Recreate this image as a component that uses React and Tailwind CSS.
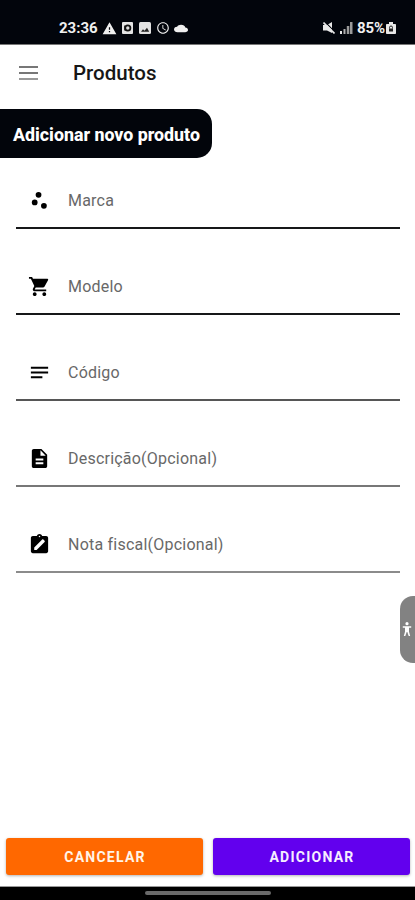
import clsx from "clsx";
import {
  MdAccessTime,
  MdCloud,
  MdDescription,
  MdNotes,
  MdScatterPlot,
  MdShoppingCart,
  MdWarning,
} from "react-icons/md";

function ClipboardEditIcon({ className }) {
  return (
    <svg viewBox="0 0 24 24" className={className}>
      <path
        fill="currentColor"
        d="M19 3h-4.18C14.4 1.84 13.3 1 12 1s-2.4.84-2.82 2H5c-1.1 0-2 .9-2 2v14c0 1.1.9 2 2 2h14c1.1 0 2-.9 2-2V5c0-1.1-.9-2-2-2z"
      />
      <circle cx="12" cy="3.6" r="0.8" fill="#fff" />
      <path fill="#fff" d="M6.500 15.200v2.500H9l8.300-8.300c.4-.4.4-.8 0-1.200l-1.300-1.300c-.4-.4-.8-.4-1.200 0z" />
    </svg>
  );
}

function SafeIcon({ className }) {
  return (
    <svg viewBox="0 0 11 12" className={className}>
      <rect width="11" height="12" rx="1" fill="#e4e4e4" />
      <circle cx="5.8" cy="6" r="2.6" fill="#ddd" stroke="#111" strokeWidth="1.8" />
      <path d="M2.800 3.500v5" stroke="#111" strokeWidth="1.200" />
    </svg>
  );
}

function PictureIcon({ className }) {
  return (
    <svg viewBox="0 0 12 12" className={className}>
      <rect width="12" height="12" rx="1.5" fill="#e2e2e2" />
      <path fill="#222" d="M2 9.800l2-2.500 1.500 1.500L8 5.800l2.200 4z" />
    </svg>
  );
}

function MuteIcon({ className }) {
  return (
    <svg viewBox="0 0 12 12" className={className}>
      <path fill="#e8e8e8" d="M0 3h4l5-3v11L4 8.500H0z" />
      <path d="M1.200-.8l11 11" stroke="#02050c" strokeWidth="1.200" />
      <path d="M.5.5l11 11" stroke="#e8e8e8" strokeWidth="1.600" />
    </svg>
  );
}

function SignalIcon({ className }) {
  return (
    <svg viewBox="0 0 13 12" className={className}>
      <path fill="#e8e8e8" d="M0 9h2v3H0z" />
      <path fill="#b0b0b0" d="M3.500 7h2v5h-2z" />
      <path fill="#9a9a9a" d="M6.800 4h2.500v8H6.800zM10 0h2.500v12H10z" />
    </svg>
  );
}

function BatteryIcon({ className }) {
  return (
    <svg viewBox="0 0 10 12" className={className}>
      <path fill="#e8e8e8" d="M3 0h4v2h2.200c.5 0 .8.3.8.8v8.400c0 .5-.3.800-.8.800H.8c-.5 0-.8-.3-.8-.8V2.800c0-.5.3-.8.8-.8H3z" />
      <path fill="none" stroke="#222" d="M3.500 6.500v-1a1.500 1.500 0 0 1 3 0v1" />
      <path fill="#222" d="M3 6.500h4v3H3z" />
    </svg>
  );
}

function AccessibilityIcon({ className }) {
  return (
    <svg viewBox="0 0 10 15" className={className}>
      <circle cx="5" cy="1.700" r="1.600" fill="#fff" />
      <path fill="#fff" d="M.8 4.200h8.400v1.500H7v4L8.200 14H6.700L5.300 10h-.6L3.300 14H1.800L3 9.700v-4H.8z" />
    </svg>
  );
}

const fields = [
  { label: "Marca", icon: MdScatterPlot, line: "border-[#161819]" },
  { label: "Modelo", icon: MdShoppingCart, line: "border-[#161819]" },
  { label: "Código", icon: MdNotes, line: "border-[#565656]" },
  { label: "Descrição(Opcional)", icon: MdDescription, line: "border-[#777]" },
  { label: "Nota fiscal(Opcional)", icon: ClipboardEditIcon, line: "border-[#8b8b8b]" },
];

function StatusBar() {
  return (
    <div className="flex h-11 items-end justify-between bg-[#02050c] pr-[19px] pb-[8px] pl-[59px] text-[#f0f0f0]">
      <div className="flex h-4 items-center">
        <span className="w-[39px] text-[15px] leading-4 font-bold whitespace-nowrap">23:36</span>
        <MdWarning className="ml-[4px] size-[15px]" />
        <SafeIcon className="ml-[5px] h-3 w-[11px]" />
        <PictureIcon className="ml-[6px] size-3" />
        <MdAccessTime className="ml-[5px] size-[14px]" />
        <MdCloud className="ml-[4px] h-[11px] w-[14px]" preserveAspectRatio="none" />
      </div>
      <div className="flex h-4 items-center">
        <MuteIcon className="size-3" />
        <SignalIcon className="ml-[5px] h-3 w-[13px]" />
        <span className="ml-[4px] w-[29px] text-[15px] leading-4 font-bold tracking-[-0.1px]">85%</span>
        <BatteryIcon className="h-3 w-[10px]" />
      </div>
    </div>
  );
}

function Field({ label, icon: Icon, line }) {
  return (
    <label className={clsx("flex h-[86px] items-end border-b-2 pb-[14px] pl-3", line)}>
      <Icon className="mb-px size-[23px] shrink-0 text-black" />
      <span className="ml-[17px] text-[16px] leading-6 tracking-[0.22px] text-[#686868]">{label}</span>
    </label>
  );
}

export default function App() {
  return (
    <div className="relative flex h-[900px] w-full flex-col overflow-hidden bg-white font-[Roboto,sans-serif]">
      <StatusBar />

      <header className="flex h-[65px] items-center border-t border-[#777] pb-[8px] pl-[19px]">
        <button type="button" aria-label="Menu" className="flex w-[19px] flex-col gap-[4px]">
          <span className="h-[2px] bg-[#777]" />
          <span className="h-[2px] bg-[#777]" />
          <span className="h-[2px] bg-[#999]" />
        </button>
        <h1 className="ml-[35px] pt-px text-[20.500px] font-medium text-[#171717]">Produtos</h1>
      </header>

      <h2 className="flex h-[49px] w-[212px] items-center rounded-r-[15px] bg-[#02050b] pt-[3px] pl-[13px] text-[17.800px] font-extrabold whitespace-nowrap text-white">
        Adicionar novo produto
      </h2>

      <form className="-mt-[15px] pr-[15px] pl-[16px]">
        {fields.map((field) => (
          <Field key={field.label} {...field} />
        ))}
      </form>

      <div className="mt-auto flex gap-[10px] pr-[5px] pb-[11px] pl-[6px]">
        <button
          type="button"
          className="h-[37px] flex-1 rounded-[3px] bg-[#ff6800] pt-px pl-px text-[14px] font-bold tracking-[1.25px] text-[#fff4e8] shadow-[0_1px_3px_rgba(0,0,0,0.3)]"
        >
          CANCELAR
        </button>
        <button
          type="button"
          className="h-[37px] flex-1 rounded-[3px] bg-[#6200ee] pt-px pl-px text-[14px] font-bold tracking-[1.25px] text-[#f6edff] shadow-[0_1px_3px_rgba(0,0,0,0.3)]"
        >
          ADICIONAR
        </button>
      </div>

      <div className="flex h-[14px] shrink-0 justify-center border-t border-[#999] bg-black pt-[4px]">
        <span className="h-1 w-[126px] rounded-full bg-[#6a6a6a]" />
      </div>

      <div className="absolute top-[596px] right-0 flex h-[67px] w-[15px] items-center justify-center rounded-l-[13px] bg-[#828282] pr-px">
        <AccessibilityIcon className="h-[15px] w-[10px]" />
      </div>
    </div>
  );
}
